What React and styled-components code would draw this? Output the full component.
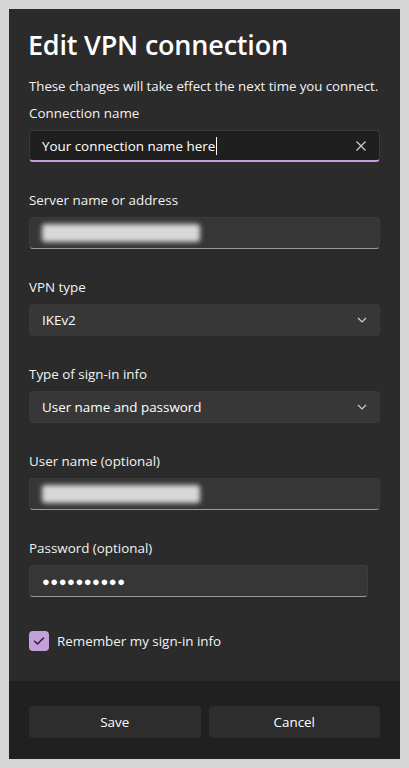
import React from "react"
import styled, { createGlobalStyle } from "styled-components"

const Global = createGlobalStyle`
html,body{margin:0;padding:0;background:#d6d6d6;}
body{font-family:"Segoe UI","Open Sans","Noto Sans",sans-serif;}
*{box-sizing:border-box;}
`

const Page = styled.div`
padding:9px;
width:409px;
height:768px;
`

const Dialog = styled.section`
width:391px;
height:750px;
display:flex;
flex-direction:column;
background:#2b2b2b;
color:#ffffff;
`

const Body = styled.div`
flex:1;
padding:18px 20px 0 20px;
display:flex;
flex-direction:column;
`

const Title = styled.h1`
margin:0 0 0 -1px;
font-size:27px;
font-weight:600;
line-height:36px;
letter-spacing:-0.2px;
`

const Sub = styled.p`
margin:13px 0 0 0;
font-size:13.3px;
line-height:20px;
color:#f2f2f2;
white-space:nowrap;
letter-spacing:-0.05px;
`

const Field = styled.div`
display:flex;
flex-direction:column;
margin-top:${p => p.first ? '7px' : '28px'};
`

const Label = styled.label`
font-size:13.4px;
line-height:20px;
color:#f2f2f2;
margin-bottom:7px;
`

const Box = styled.div`
position:relative;
height:32px;
width:${p => p.narrow ? '339px' : '351px'};
border-radius:4px;
display:flex;
align-items:center;
padding:0 12px;
font-size:13.4px;
color:#fff;
background:${p => p.focused ? '#1f1f1f' : p.select ? '#373737' : '#363636'};
border:1px solid ${p => p.focused ? '#3a3a3a' : p.select ? '#3a3a3a' : '#3c3c3c'};
border-bottom:${p => p.focused ? '2px solid #c3a0dc' : p.select ? '1px solid #3a3a3a' : '1px solid #9a9a9a'};
`

const Caret = styled.span`
display:inline-block;
width:1px;
height:18px;
background:#fff;
margin-left:1px;
`

const Grow = styled.span`
flex:1;
`

const Blur = styled.span`
display:inline-block;
width:${p => p.w}px;
height:18px;
background:#d8d8d8;
border-radius:3px;
filter:blur(2.5px);
`

const Dots = styled.span`
font-size:13px;
letter-spacing:0.5px;
`

const CheckRow = styled.div`
display:flex;
align-items:center;
gap:8px;
margin-top:34px;
font-size:13.4px;
color:#f2f2f2;
`

const Check = styled.span`
width:20px;
height:20px;
border-radius:4px;
background:#c3a0dc;
display:flex;
align-items:center;
justify-content:center;
`

const Footer = styled.div`
height:78px;
background:#202020;
display:flex;
gap:8px;
padding:25px 20px 0 20px;
`

const Button = styled.button`
flex:1;
height:32px;
border:none;
border-radius:4px;
background:#2d2d2d;
color:#fff;
font-family:inherit;
font-size:13.4px;
`

const IconX = () => (
  <svg width="12" height="12" viewBox="0 0 12 12">
    <path d="M1.5 1.5 L10.5 10.5 M10.5 1.5 L1.5 10.5" stroke="#d0d0d0" strokeWidth="1.2" fill="none" />
  </svg>
)

const Chev = () => (
  <svg width="10" height="6" viewBox="0 0 10 6">
    <path d="M1 1 L5 5 L9 1" stroke="#cfcfcf" strokeWidth="1.2" fill="none" />
  </svg>
)

const Tick = () => (
  <svg width="12" height="10" viewBox="0 0 12 10">
    <path d="M1.5 5.2 L4.5 8 L10.5 2" stroke="#1c1c1c" strokeWidth="1.4" fill="none" strokeLinecap="round" strokeLinejoin="round" />
  </svg>
)

export default function App() {
  return (
    <Page>
      <Global />
      <Dialog>
        <Body>
          <Title>Edit VPN connection</Title>
          <Sub>These changes will take effect the next time you connect.</Sub>
          <Field first>
            <Label>Connection name</Label>
            <Box focused>
              <span>Your connection name here</span><Caret />
              <Grow />
              <IconX />
            </Box>
          </Field>
          <Field>
            <Label>Server name or address</Label>
            <Box><Blur w={158} /></Box>
          </Field>
          <Field>
            <Label>VPN type</Label>
            <Box select><Grow>IKEv2</Grow><Chev /></Box>
          </Field>
          <Field>
            <Label>Type of sign-in info</Label>
            <Box select><Grow>User name and password</Grow><Chev /></Box>
          </Field>
          <Field>
            <Label>User name (optional)</Label>
            <Box><Blur w={158} /></Box>
          </Field>
          <Field>
            <Label>Password (optional)</Label>
            <Box narrow><Dots>●●●●●●●●●●</Dots></Box>
          </Field>
          <CheckRow>
            <Check><Tick /></Check>
            <span>Remember my sign-in info</span>
          </CheckRow>
        </Body>
        <Footer>
          <Button>Save</Button>
          <Button>Cancel</Button>
        </Footer>
      </Dialog>
    </Page>
  )
}
